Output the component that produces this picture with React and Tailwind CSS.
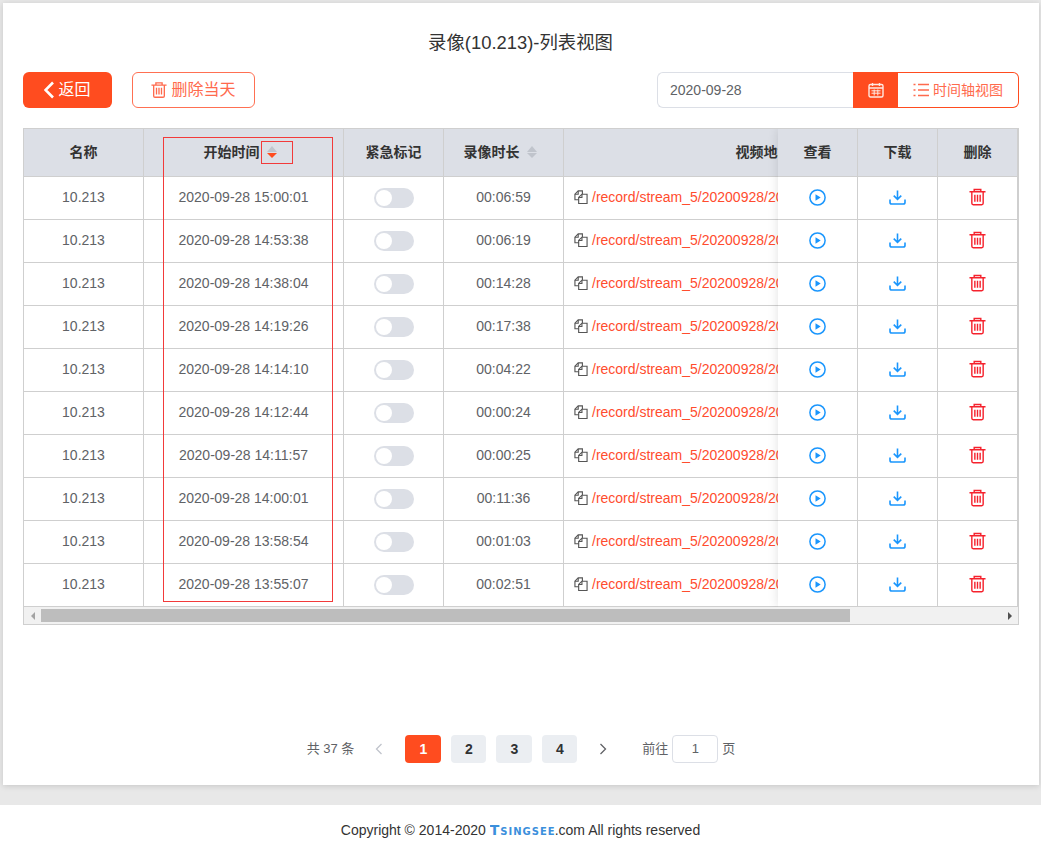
import React from 'react';

const rows = [
  ['2020-09-28 15:00:01', '00:06:59'],
  ['2020-09-28 14:53:38', '00:06:19'],
  ['2020-09-28 14:38:04', '00:14:28'],
  ['2020-09-28 14:19:26', '00:17:38'],
  ['2020-09-28 14:14:10', '00:04:22'],
  ['2020-09-28 14:12:44', '00:00:24'],
  ['2020-09-28 14:11:57', '00:00:25'],
  ['2020-09-28 14:00:01', '00:11:36'],
  ['2020-09-28 13:58:54', '00:01:03'],
  ['2020-09-28 13:55:07', '00:02:51'],
];

const font = { fontFamily: '"Liberation Sans", "Noto Sans CJK SC", sans-serif' };

function TrashIcon({ className }) {
  return (
    <svg viewBox="0 0 18 18" className={className} fill="none" stroke="currentColor" strokeWidth="1.5">
      <path d="M.5 3.5h17M5.5 3.5V1h7v2.5M3 3.5v12.2c0 .9.6 1.5 1.5 1.5h9c.9 0 1.5-.6 1.5-1.5V3.5" />
      <path d="M6.2 6.5v7.5M9 6.5v7.5M11.8 6.5v7.5" />
    </svg>
  );
}

function PlayIcon() {
  return (
    <svg viewBox="0 0 17 17" className="w-[17px] h-[17px] text-[#1a96fd]">
      <circle cx="8.5" cy="8.5" r="7.6" fill="none" stroke="currentColor" strokeWidth="1.5" />
      <path d="M6.5 5.2v6.6l5.2-3.3z" fill="currentColor" />
    </svg>
  );
}

function DownloadIcon() {
  return (
    <svg viewBox="0 0 18 16" className="w-[17px] h-[15px] text-[#1a96fd]" fill="none" stroke="currentColor" strokeWidth="1.7">
      <path d="M9 .5v9M5 6l4 4 4-4" />
      <path d="M1 10v3c0 1 .7 1.9 1.8 1.9h12.4c1.1 0 1.8-.9 1.8-1.9v-3" />
    </svg>
  );
}

function CopyIcon() {
  return (
    <svg viewBox="0 0 15 15" className="w-[14px] h-[14px] shrink-0 text-[#555]" fill="none" stroke="currentColor" strokeWidth="1.2">
      <path d="M5 10.5H1V4.5L4.5 1h4.5v3.5" />
      <path d="M1 4.5h3.5V1" />
      <path d="M5 8l3.5-3.5H14v10H5z" />
      <path d="M5 8h3.5V4.5" />
    </svg>
  );
}

function SortIcon({ active }) {
  return (
    <span className="inline-flex flex-col items-center gap-[1px] ml-[7px] mr-[7px]">
      <span className="w-0 h-0 border-x-[5px] border-x-transparent border-b-[6px] border-b-[#c0c4cc]" />
      <span className={`w-0 h-0 border-x-[5px] border-x-transparent border-t-[5px] ${active ? 'border-t-[#ff4c1f]' : 'border-t-[#c0c4cc]'}`} />
    </span>
  );
}

function HeadCell({ children }) {
  return (
    <div className="h-[48px] shrink-0 flex items-center justify-center border-r border-b border-[#cfcfcf] text-sm font-bold text-[#333] pb-[1px] bg-[#dcdfe6]">
      {children}
    </div>
  );
}

function Cell({ className, children }) {
  return (
    <div className={`h-[43px] shrink-0 flex items-center border-r border-b border-[#cfcfcf] ${className || 'justify-center pb-[2px]'}`}>
      {children}
    </div>
  );
}

function Table() {
  return (
    <div className="relative mx-5 mt-[20px] border border-[#cfcfcf] text-sm text-[#606266] h-[497px] flex flex-col">
      <div className="relative flex-1 overflow-hidden">
        <div className="flex w-[1000px]">
          <div className="w-[120px] shrink-0 flex flex-col bg-white">
            <HeadCell>名称</HeadCell>
            {rows.map((r) => <Cell key={r[0]}>10.213</Cell>)}
          </div>
          <div className="w-[200px] shrink-0 flex flex-col">
            <HeadCell>开始时间<SortIcon active /></HeadCell>
            {rows.map((r) => <Cell key={r[0]}>{r[0]}</Cell>)}
          </div>
          <div className="w-[100px] shrink-0 flex flex-col">
            <HeadCell>紧急标记</HeadCell>
            {rows.map((r) => (
              <Cell key={r[0]} className="justify-center pb-[1px]">
                <span className="w-10 h-5 rounded-full bg-[#dcdfe6] flex items-center pl-[2px]">
                  <span className="w-4 h-4 rounded-full bg-white" />
                </span>
              </Cell>
            ))}
          </div>
          <div className="w-[120px] shrink-0 flex flex-col">
            <HeadCell>录像时长<SortIcon /></HeadCell>
            {rows.map((r) => <Cell key={r[0]}>{r[1]}</Cell>)}
          </div>
          <div className="w-[400px] shrink-0 flex flex-col">
            <HeadCell>视频地址</HeadCell>
            {rows.map((r) => (
              <Cell key={r[0]} className="justify-start pb-[2px] pl-[10px] gap-1 whitespace-nowrap overflow-hidden text-[#ff4c2e]">
                <CopyIcon />/record/stream_5/20200928/20200928150001.mp4
              </Cell>
            ))}
          </div>
        </div>
        {/* fixed right columns */}
        <div className="absolute top-0 right-0 w-[240px] flex bg-white shadow-[0_0_10px_rgba(0,0,0,0.12)]">
          <div className="w-20 flex flex-col">
            <HeadCell>查看</HeadCell>
            {rows.map((r) => <Cell key={r[0]}><PlayIcon /></Cell>)}
          </div>
          <div className="w-20 flex flex-col">
            <HeadCell>下载</HeadCell>
            {rows.map((r) => <Cell key={r[0]}><DownloadIcon /></Cell>)}
          </div>
          <div className="w-20 flex flex-col">
            <HeadCell>删除</HeadCell>
            {rows.map((r) => <Cell key={r[0]}><TrashIcon className="w-[17px] h-[18px] text-[#f5222d]" /></Cell>)}
          </div>
        </div>
      </div>
      {/* scrollbar */}
      <div className="h-[17px] shrink-0 bg-[#f1f1f1] flex items-center">
        <span className="w-[17px] flex justify-center">
          <span className="w-0 h-0 border-y-[4px] border-y-transparent border-r-[4px] border-r-[#a3a3a3]" />
        </span>
        <span className="w-[809px] h-[13px] bg-[#bdbdbd]" />
        <span className="flex-1" />
        <span className="w-[17px] flex justify-center">
          <span className="w-0 h-0 border-y-[4px] border-y-transparent border-l-[4px] border-l-[#505050]" />
        </span>
      </div>
      {/* red marks drawn over the screenshot */}
      <div className="absolute left-[139px] top-[8px] w-[170px] h-[465px] border border-[#f23a3a] pointer-events-none" />
      <div className="absolute left-[237px] top-[12px] w-[32px] h-[23px] border border-[#f23a3a] pointer-events-none" />
    </div>
  );
}

function Pager() {
  return (
    <div className="mt-auto pb-[22px] flex items-center justify-center text-[13px] text-[#606266]">
      <span className="mr-[20px]">共 37 条</span>
      <svg viewBox="0 0 10 12" className="w-[10px] h-3 text-[#c0c4cc] mr-[21px]" fill="none" stroke="currentColor" strokeWidth="1.3"><path d="M7.5 1 2.5 6l5 5" /></svg>
      <span className="w-9 h-7 rounded bg-[#ff4c1f] text-white text-sm font-bold flex items-center justify-center">1</span>
      <span className="w-[35px] h-7 ml-[10px] rounded bg-[#ebeef2] text-[#303133] text-sm font-bold flex items-center justify-center">2</span>
      <span className="w-9 h-7 ml-[10px] rounded bg-[#ebeef2] text-[#303133] text-sm font-bold flex items-center justify-center">3</span>
      <span className="w-[35px] h-7 ml-[10px] rounded bg-[#ebeef2] text-[#303133] text-sm font-bold flex items-center justify-center">4</span>
      <svg viewBox="0 0 10 12" className="w-[10px] h-3 text-[#606266] ml-[21px]" fill="none" stroke="currentColor" strokeWidth="1.3"><path d="M2.5 1l5 5-5 5" /></svg>
      <span className="ml-[34px]">前往</span>
      <span className="w-[46px] h-7 mx-[4px] rounded border border-[#dcdfe6] flex items-center justify-center">1</span>
      <span>页</span>
    </div>
  );
}

export default function App() {
  return (
    <div className="min-h-screen bg-[#e8e8e8] flex flex-col" style={font}>
      <div className="h-[782px] ml-[3px] mr-[2px] mt-[3px] bg-white shadow-[0_1px_6px_rgba(0,0,0,0.15)] flex flex-col">
        <h1 className="pt-[29px] text-center text-[18.4px] leading-[22px] text-[#333] font-normal pr-[1px]">录像(10.213)-列表视图</h1>
        <div className="mt-[18px] mx-5 flex items-center h-9">
          <button className="w-[89px] h-9 rounded-md bg-[#ff4c1f] text-white text-base flex items-center justify-center">
            <svg viewBox="0 0 10 18" className="w-[10px] h-[18px] mr-[4px]" fill="none" stroke="currentColor" strokeWidth="2.6"><path d="M9 1.5 1.5 9 9 16.5" /></svg>
            返回
          </button>
          <button className="w-[123px] h-9 ml-[20px] rounded-md border border-[#ff7052] text-[#ff6a4d] text-base flex items-center justify-center gap-1">
            <TrashIcon className="w-4 h-4" />
            删除当天
          </button>
          <div className="ml-auto flex h-9">
            <div className="w-[196px] border border-r-0 border-[#dcdfe6] rounded-l-md pl-3 flex items-center text-sm text-[#606266]">2020-09-28</div>
            <div className="w-[45px] bg-[#ff4c1f] flex items-center justify-center">
              <svg viewBox="0 0 16 16" className="w-4 h-4 text-[#ffe9e2]" fill="none" stroke="currentColor" strokeWidth="1.4">
                <rect x="1" y="2.5" width="14" height="12.5" rx="1.5" />
                <path d="M1 6h14M4.5 1v3M11.5 1v3" />
                <path d="M3.5 8.8h9M3.5 11.2h9M6.2 7.5v6M9.8 7.5v6" strokeWidth="1" />
              </svg>
            </div>
            <div className="w-[121px] border border-l-0 border-[#ff4c1f] rounded-r-md flex items-center justify-center gap-1 text-sm text-[#ff6a4d]">
              <svg viewBox="0 0 16 14" className="w-4 h-[14px]" fill="none" stroke="currentColor" strokeWidth="1.4">
                <path d="M5 1.5h11M5 7h11M5 12.5h11M.5 1.5h2M.5 7h2M.5 12.5h2" />
              </svg>
              时间轴视图
            </div>
          </div>
        </div>
        <Table />
        <Pager />
      </div>
      <div className="mt-[20px] h-[44px] bg-white flex items-center justify-center text-sm text-[#333] pt-[6px] whitespace-pre">
        Copyright © 2014-2020{' '}
        <span className="flex items-baseline text-[#3b8fdc] font-bold tracking-[1px] w-[65px] overflow-hidden" style={{ fontFamily: '"DejaVu Sans", sans-serif' }}>
          <span className="text-[14px]">T</span>
          <span className="text-[10px]">SINGSEE</span>
        </span>
        .com All rights reserved
      </div>
    </div>
  );
}
